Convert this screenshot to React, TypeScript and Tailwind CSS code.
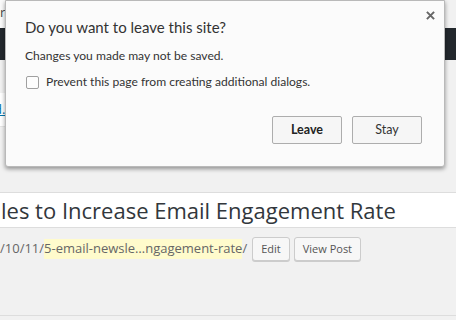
function LeaveDialog() {
  return (
    <div className="absolute left-[5px] top-0 flex h-[167px] w-[440px] flex-col rounded-b-[3px] border border-[#b9b9b9] bg-[#fbfbfb] font-['Lato',sans-serif] text-[#333] shadow-[0_2px_4px_rgba(0,0,0,0.4)]">
      <div className="flex items-start justify-between pl-[19px] pr-[9px] pt-[15px]">
        <h1 className="text-[15px] leading-[22px] text-[#333]">Do you want to leave this site?</h1>
        <button className="-mt-[5px] flex size-[9px] items-center justify-center text-[#666]">
          <svg viewBox="0 0 10 10" className="size-[9px]" fill="none" stroke="currentColor" strokeWidth="2.2">
            <path d="M1 1l8 8M9 1l-8 8" />
          </svg>
        </button>
      </div>
      <p className="mt-[10px] pl-[19px] text-[12.1px] leading-[16px]">Changes you made may not be saved.</p>
      <label className="mt-[10px] flex items-center gap-[7px] pl-[20px] text-[12.1px] leading-[16px]">
        <span className="size-[13px] rounded-[2px] border border-[#a0a0a0] bg-[#fdfdfd]" />
        Prevent this page from creating additional dialogs.
      </label>
      <div className="mt-auto flex justify-end gap-[10px] pb-[22px] pr-[22px]">
        <button className="h-[28px] w-[70px] rounded-[2px] border border-[#adadad] bg-[#f6f6f6] text-[12.5px] font-bold text-[#222]">
          Leave
        </button>
        <button className="h-[28px] w-[70px] rounded-[2px] border border-[#adadad] bg-[#f6f6f6] text-[12.5px] text-[#333]">
          Stay
        </button>
      </div>
    </div>
  );
}

export default function App() {
  return (
    <div className="relative h-[320px] w-[456px] overflow-hidden bg-[#f1f1f1] font-['Open_Sans',sans-serif]">
      <div className="flex h-[28px]">
        <div className="w-[8px] bg-[#fafafa] pt-[3px] text-[13px] text-[#444]">r</div>
        <div className="flex-1 bg-[#f1f1f1]" />
      </div>
      <div className="h-[32px] bg-[#23282d]" />
      <div className="h-[33px]" />
      <div className="flex h-[34px] w-[12px] items-center border-b border-[#e5e5e5] bg-white text-[13px]">
        <a className="-ml-[6px] text-[#0073aa] underline">d.</a>
      </div>
      <div className="h-[65px]" />

      <div className="flex h-[36px] items-center border-y border-[#dddddd] bg-white">
        <span className="whitespace-nowrap pl-[1px] text-[22px] leading-none text-[#32373c]">
          les to Increase Email Engagement Rate
        </span>
      </div>

      <div className="mt-[9px] flex h-[24px] items-center whitespace-nowrap text-[13px] text-[#666]">
        <span>/10/11/</span>
        <span className="bg-[#fffbcc]">5-email-newsle…ngagement-rate</span>
        <span>/</span>
        <button className="ml-[5px] h-[24px] rounded-[3px] border border-[#cccccc] bg-[#f7f7f7] px-[8px] text-[11px] text-[#555] shadow-[0_1px_0_#ccc]">
          Edit
        </button>
        <button className="ml-[4px] h-[24px] rounded-[3px] border border-[#cccccc] bg-[#f7f7f7] px-[8px] text-[11px] text-[#555] shadow-[0_1px_0_#ccc]">
          View Post
        </button>
      </div>

      <div className="mt-[54px] border-b border-[#dddddd]" />

      <LeaveDialog />
    </div>
  );
}
